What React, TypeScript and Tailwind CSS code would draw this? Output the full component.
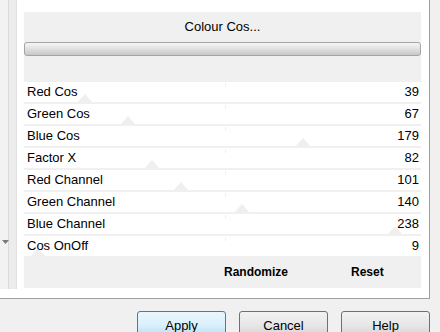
import React from "react";

const params = [
  { name: "Red Cos", value: 39 },
  { name: "Green Cos", value: 67 },
  { name: "Blue Cos", value: 179 },
  { name: "Factor X", value: 82 },
  { name: "Red Channel", value: 101 },
  { name: "Green Channel", value: 140 },
  { name: "Blue Channel", value: 238 },
  { name: "Cos OnOff", value: 9 },
];

function ParamRow({ name, value }: { name: string; value: number }) {
  // faint slider thumb sits under the label, placed by value
  const left = (value / 255) * 397 - 7;
  return (
    <div className="relative h-[20px] bg-white flex items-center justify-between pl-[3px] pr-[2px]">
      <div className="absolute left-[201px] top-[1px] w-px h-[4px] bg-[#efefef]" />
      <svg
        className="absolute bottom-0"
        style={{ left }}
        width="14"
        height="8"
        viewBox="0 0 14 8"
      >
        <polygon points="7,0 14,8 0,8" fill="#efefef" />
      </svg>
      <span className="relative text-[13px] leading-none -mt-px">{name}</span>
      <span className="relative text-[13px] leading-none -mt-px">{value}</span>
    </div>
  );
}

function DialogButton({ label, primary }: { label: string; primary?: boolean }) {
  return (
    <button
      className={`w-[89px] h-[29px] rounded-[3px] border text-[13px] flex items-center justify-center ${
        primary
          ? "border-[#3c7fb1] bg-gradient-to-b from-[#eaf6fd] via-[#d9f0fc] to-[#a7d9f5]"
          : "border-[#707070] bg-gradient-to-b from-[#f2f2f2] via-[#e6e6e6] to-[#cfcfcf]"
      }`}
    >
      {label}
    </button>
  );
}

export default function App() {
  return (
    <div
      className="w-[440px] h-[332px] bg-[#f0f0f0] overflow-hidden text-black"
      style={{ fontFamily: '"Liberation Sans", Arial, sans-serif' }}
    >
      {/* framed area */}
      <div className="w-[430px] h-[299px] bg-white border-r border-b border-[#a0a0a0] flex items-start">
        {/* scrollbar of the list on the left */}
        <div className="w-[17px] h-[289px] flex">
          <div className="w-[9px] h-full bg-[#f2f2f2] border-r border-[#dadada] flex flex-col items-center">
            <svg className="mt-[240px] ml-[2px]" width="7" height="4" viewBox="0 0 7 4">
              <polygon points="0,0 7,0 3.5,4" fill="#7a7a7a" />
            </svg>
          </div>
          <div className="w-[8px] h-full bg-[#ececec] border-r border-[#e2e2e2]" />
        </div>

        {/* effect panel */}
        <div className="ml-[7px] mt-[12px] w-[397px] h-[276px] bg-[#f0f0f0] flex flex-col">
          <div className="h-[30px] flex items-center justify-center text-[13px]">
            Colour Cos...
          </div>
          <div className="h-[14px] rounded-[3px] border border-[#a4a4a4] bg-gradient-to-b from-[#f6f6f6] via-[#e0e0e0] to-[#c8c8c8]" />
          <div className="mt-[26px] flex flex-col gap-[2px]">
            {params.map((p) => (
              <ParamRow key={p.name} name={p.name} value={p.value} />
            ))}
          </div>
          <div className="flex-1 flex items-center pl-[200px] text-[12px] font-bold">
            <span>Randomize</span>
            <span className="ml-[63px]">Reset</span>
          </div>
        </div>
      </div>

      {/* dialog buttons */}
      <div className="flex gap-[13px] pl-[137px] pt-[12px]">
        <DialogButton label="Apply" primary />
        <DialogButton label="Cancel" />
        <DialogButton label="Help" />
      </div>
    </div>
  );
}
